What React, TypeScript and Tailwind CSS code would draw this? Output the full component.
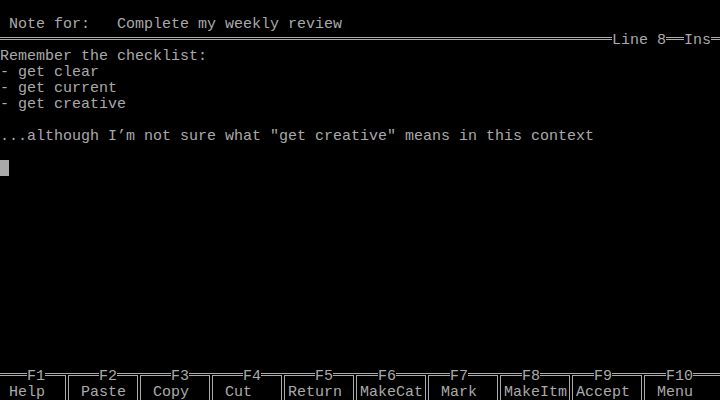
const KEYS = [
  { f: 'F1', fPad: 'w-[27px]', label: 'Help', lPad: 'pl-[9px]' },
  { f: 'F2', fPad: 'w-[27px]', label: 'Paste', lPad: 'pl-[9px]' },
  { f: 'F3', fPad: 'w-[27px]', label: 'Copy', lPad: 'pl-[9px]' },
  { f: 'F4', fPad: 'w-[27px]', label: 'Cut', lPad: 'pl-[9px]' },
  { f: 'F5', fPad: 'w-[27px]', label: 'Return', lPad: 'pl-0' },
  { f: 'F6', fPad: 'w-[18px]', label: 'MakeCat', lPad: 'pl-0' },
  { f: 'F7', fPad: 'w-[18px]', label: 'Mark', lPad: 'pl-[9px]' },
  { f: 'F8', fPad: 'w-[18px]', label: 'MakeItm', lPad: 'pl-0' },
  { f: 'F9', fPad: 'w-[18px]', label: 'Accept', lPad: 'pl-0' },
  { f: 'F10', fPad: 'w-[18px]', label: 'Menu', lPad: 'pl-[9px]' },
];

const BODY = [
  'Remember the checklist:',
  '- get clear',
  '- get current',
  '- get creative',
  '',
  '...although I’m not sure what "get creative" means in this context',
  '',
];

// ═ drawn as two 1px rules inside a 16px text cell
function Rule({ className = '' }: { className?: string }) {
  return (
    <div className={`h-4 shrink-0 ${className}`}>
      <div className="mt-[5px] h-[3px] border-y border-[#aaaaaa]" />
    </div>
  );
}

// ╦
function TeeDown() {
  return (
    <svg width="9" height="16" viewBox="0 0 9 16" shapeRendering="crispEdges" fill="#aaaaaa" className="shrink-0">
      <rect x="0" y="5" width="9" height="1" />
      <rect x="0" y="7" width="3" height="1" />
      <rect x="5" y="7" width="4" height="1" />
      <rect x="2" y="7" width="1" height="9" />
      <rect x="5" y="7" width="1" height="9" />
    </svg>
  );
}

// ║
function VBar() {
  return (
    <svg width="9" height="16" viewBox="0 0 9 16" shapeRendering="crispEdges" fill="#aaaaaa" className="shrink-0">
      <rect x="2" y="0" width="1" height="16" />
      <rect x="5" y="0" width="1" height="16" />
    </svg>
  );
}

function Line({ children }: { children?: React.ReactNode }) {
  return <pre className="h-4 leading-[18px] whitespace-pre font-[inherit]">{children}</pre>;
}

export default function App() {
  return (
    <div className="w-[720px] h-[400px] bg-black text-[#aaaaaa] font-['Liberation_Mono','DejaVu_Sans_Mono',monospace] text-[15px] flex flex-col overflow-hidden">
      <div className="h-4" />
      <Line>{' Note for:   Complete my weekly review'}</Line>

      {/* status rule */}
      <div className="flex h-4 leading-[18px]">
        <Rule className="flex-1" />
        <span className="whitespace-pre">Line 8</span>
        <Rule className="w-[18px]" />
        <span>Ins</span>
        <Rule className="w-[9px]" />
      </div>

      {BODY.map((t, i) => (
        <Line key={i}>{t}</Line>
      ))}

      {/* cursor */}
      <div className="h-4">
        <div className="w-[9px] h-4 bg-[#aaaaaa]" />
      </div>

      <div className="flex-1" />

      {/* function key bar */}
      <div className="grid grid-cols-10 leading-[18px]">
        {KEYS.map((k, i) => (
          <div key={k.f} className="flex flex-col">
            <div className="flex h-4">
              <Rule className={k.fPad} />
              <span>{k.f}</span>
              <Rule className="flex-1" />
              {i < KEYS.length - 1 && <TeeDown />}
            </div>
            <div className="flex h-4">
              <span className={`flex-1 whitespace-pre ${k.lPad}`}>{k.label}</span>
              {i < KEYS.length - 1 && <VBar />}
            </div>
          </div>
        ))}
      </div>
    </div>
  );
}
